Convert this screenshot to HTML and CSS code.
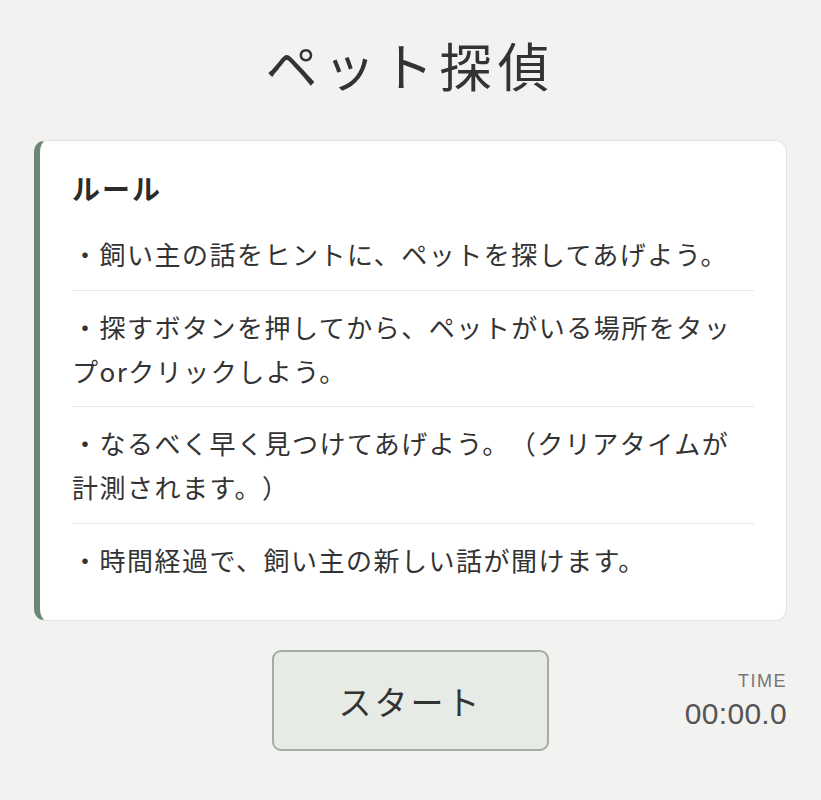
FILE: index.html
```html
<!DOCTYPE html>
<html lang="ja">
<head>
    <meta charset="UTF-8">
    <meta name="viewport" content="width=device-width, initial-scale=1.0">
    <title>ペット探偵</title>
    <link rel="stylesheet" href="styles.css">
</head>
<body>
    <h1 class="title">ペット探偵</h1>

    <div class="rules">
        <h2 class="rules-title">ルール</h2>
        <ul class="rules-list">
            <li>・飼い主の話をヒントに、ペットを探してあげよう。</li>
            <li>・探すボタンを押してから、ペットがいる場所をタップorクリックしよう。</li>
            <li>・なるべく早く見つけてあげよう。（クリアタイムが計測されます。）</li>
            <li>・時間経過で、飼い主の新しい話が聞けます。</li>
        </ul>
    </div>

    <div class="controls">
        <button type="button" class="start-btn">スタート</button>
        <div class="timer">
            <div class="timer-label">TIME</div>
            <div class="timer-value">00:00.0</div>
        </div>
    </div>
</body>
</html>
```

FILE: styles.css
```css
body {
    margin: 0;
    padding: 0 34px;
    background-color: #f2f2f0;
    color: #333333;
    font-family: "Noto Sans CJK JP", "Noto Sans", sans-serif;
    text-spacing-trim: space-all;
}
.title {
    margin: 34px 0 44px;
    font-size: 52px;
    font-weight: 400;
    line-height: 1.2;
    letter-spacing: 6px;
    text-align: center;
    color: #333333;
}
.rules {
    background-color: #ffffff;
    border: 1px solid #e2e2e0;
    border-left: 6px solid #6c8678;
    border-radius: 12px;
    padding: 29px 32px 25px 32px;
}
.rules-title {
    margin: 0 0 12px;
    font-size: 28px;
    font-weight: 700;
    line-height: 36px;
    letter-spacing: 2px;
    color: #2b2b2b;
}
.rules-list {
    list-style: none;
    margin: 0;
    padding: 0;
}
.rules-list li {
    padding: 14px 10px 13.5px 0;
    font-size: 26px;
    line-height: 44px;
    letter-spacing: 1.5px;
    border-bottom: 1px solid #e8e8e6;
}
.rules-list li:last-child {
    border-bottom: none;
}
.controls {
    display: grid;
    grid-template-columns: 1fr auto 1fr;
    align-items: center;
    margin-top: 29px;
}
.start-btn {
    grid-column: 2;
    width: 277px;
    height: 101px;
    background-color: #e6ebe6;
    border: 2px solid #a3aca6;
    border-radius: 9px;
    font-family: "Noto Sans CJK JP", sans-serif;
    font-size: 33px;
    letter-spacing: 3px;
    color: #333333;
}
.timer {
    grid-column: 3;
    justify-self: end;
    text-align: right;
}
.timer-label {
    font-family: "Liberation Sans", Arial, sans-serif;
    font-size: 18px;
    letter-spacing: 1.5px;
    color: #777777;
}
.timer-value {
    margin-top: 5px;
    font-family: "Liberation Sans", Arial, sans-serif;
    font-size: 30px;
    letter-spacing: 0.3px;
    color: #555555;
}
```
